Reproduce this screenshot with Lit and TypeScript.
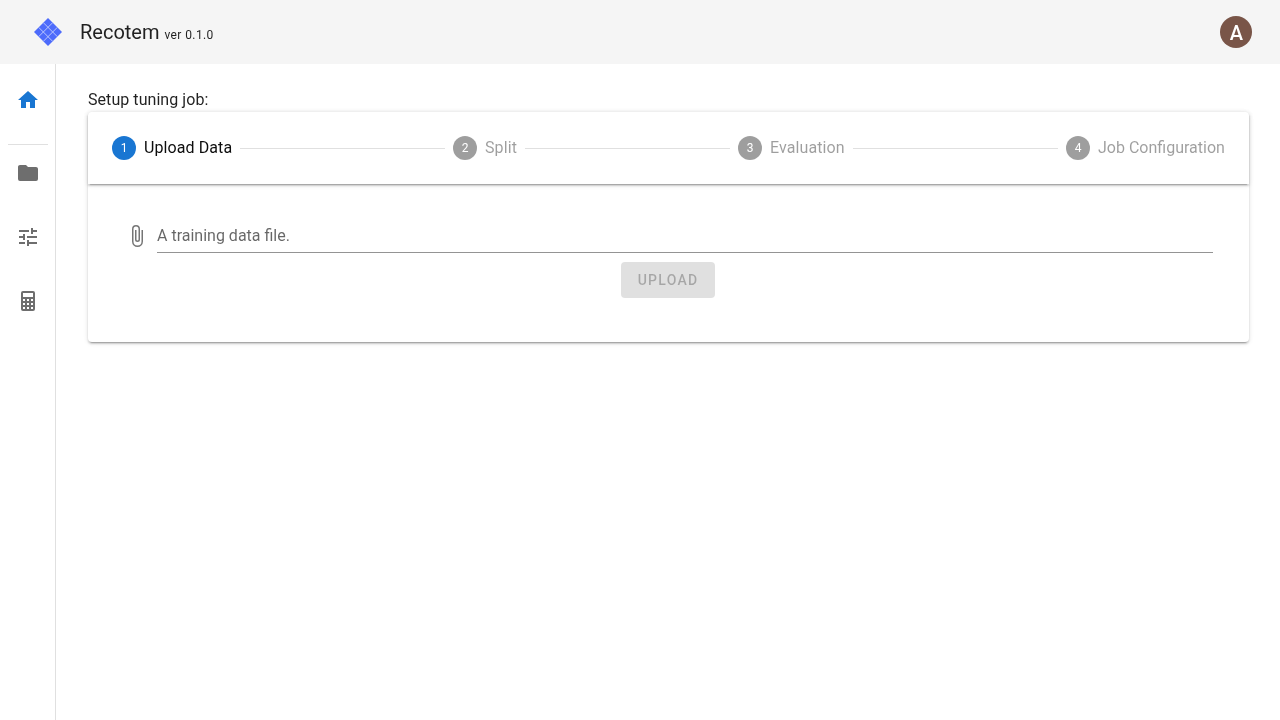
import { LitElement, html, css, svg } from "lit";
import { customElement } from "lit/decorators.js";

const P = {
  home: "M10,20V14H14V20H19V12H22L12,3L2,12H5V20H10Z",
  folder: "M10,4H4C2.89,4 2,4.89 2,6V18A2,2 0 0,0 4,20H20A2,2 0 0,0 22,18V8C22,6.89 21.1,6 20,6H12L10,4Z",
  tune: "M3,17V19H9V17H3M3,5V7H13V5H3M13,21V19H21V17H13V15H11V21H13M7,9V11H3V13H7V15H9V9H7M21,13V11H11V13H21M15,9H17V7H21V5H17V3H15V9Z",
  calc: "M7,2H17A2,2 0 0,1 19,4V20A2,2 0 0,1 17,22H7A2,2 0 0,1 5,20V4A2,2 0 0,1 7,2M7,4V8H17V4H7M7,10V12H9V10H7M11,10V12H13V10H11M15,10V12H17V10H15M7,14V16H9V14H7M11,14V16H13V14H11M15,14V16H17V14H15M7,18V20H9V18H7M11,18V20H13V18H11M15,18V20H17V18H15Z",
  clip: "M16.5,6V17.5A4,4 0 0,1 12.5,21.5A4,4 0 0,1 8.5,17.5V5A2.5,2.5 0 0,1 11,2.5A2.5,2.5 0 0,1 13.5,5V15.5A1,1 0 0,1 12.5,16.5A1,1 0 0,1 11.5,15.5V6H10V15.5A2.5,2.5 0 0,0 12.5,18A2.5,2.5 0 0,0 15,15.5V5A4,4 0 0,0 11,1A4,4 0 0,0 7,5V17.5A5.5,5.5 0 0,0 12.5,23A5.5,5.5 0 0,0 18,17.5V6H16.5Z",
};

const icon = (d: string) => html`<svg class="ic" viewBox="0 0 24 24" width="24" height="24"><path d=${d} fill="currentColor"></path></svg>`;

const logo = svg`<svg class="logo" viewBox="0 0 28 28" width="28" height="28">
  <polygon points="14,0 28,14 14,28 0,14" fill="#4d6bfb"></polygon>
  <g stroke="#b9c6fe" stroke-width="1" fill="none">
    <path d="M9.33,4.67 L23.33,18.67 M4.67,9.33 L18.67,23.33 M18.67,4.67 L4.67,18.67 M23.33,9.33 L9.33,23.33"></path>
  </g>
</svg>`;

const steps = [
  { n: 1, label: "Upload Data", active: true, wide: true },
  { n: 2, label: "Split", wide: true },
  { n: 3, label: "Evaluation", wide: true },
  { n: 4, label: "Job Configuration" },
];

@customElement("app-root")
export class AppRoot extends LitElement {
  static styles = css`
    :host { display: block; font-family: Roboto, "Liberation Sans", sans-serif; color: rgba(0,0,0,.87); background: #fff; height: 720px; overflow: hidden; }
    .gs { will-change: transform; }
    .bar { height: 64px; background: #f5f5f5; display: flex; align-items: center; padding: 0 28px 0 34px; }
    .logo { display: block; flex: none; }
    .title { font-size: 20px; margin-left: 18px; line-height: 32px; padding-top: 2px; }
    .ver { font-size: 12px; letter-spacing: 0.0333em; }
    .spacer { flex: 1; }
    .avatar { width: 32px; height: 32px; border-radius: 50%; background: #795548; color: #fff; font-size: 20px; font-weight: 500; line-height: 34px; text-align: center; text-indent: 1px; }
    .body { display: flex; height: 656px; }
    .nav { width: 55px; border-right: 1px solid #e0e0e0; display: flex; flex-direction: column; align-items: stretch; flex: none; padding-top: 24px; box-sizing: content-box; }
    .nav-item { height: 24px; display: flex; justify-content: center; color: #6e6e6e; margin-bottom: 40px; }
    .nav-item.home { color: #1976d2; margin-bottom: 32px; }
    .nav-sep { height: 1px; background: #e0e0e0; margin: 0 7px 16px 8px; }
    .ic { display: block; flex: none; }
    .main { flex: 1; min-width: 0; padding: 24px 31px 0 32px; }
    .heading { font-size: 16px; line-height: 24px; letter-spacing: 0.06px; }
    .card { background: #fff; border-radius: 4px; box-shadow: 0 3px 1px -2px rgba(0,0,0,.2), 0 2px 2px 0 rgba(0,0,0,.14), 0 1px 5px 0 rgba(0,0,0,.12); }
    .stepper { height: 72px; display: flex; align-items: center; padding: 0 24px; gap: 8px; border-radius: 4px 4px 0 0; box-shadow: 0 3px 1px -2px rgba(0,0,0,.2), 0 2px 2px 0 rgba(0,0,0,.14), 0 1px 5px 0 rgba(0,0,0,.12); }
    .step { display: flex; align-items: center; gap: 8px; font-size: 16px; line-height: 24px; color: rgba(0,0,0,.38); flex: none; }
    .step .lb { margin-top: -1px; }
    .step .lb.wide { letter-spacing: 0.09px; }
    .step.active { color: rgba(0,0,0,.95); }
    .num { width: 24px; height: 24px; border-radius: 50%; background: rgba(0,0,0,.38); color: #fff; font-size: 12px; display: flex; align-items: center; justify-content: center; }
    .step.active .num { background: #1976d2; }
    .line { flex: 1; height: 1px; background: #e0e0e0; margin-top: 1px; }
    .content { height: 158px; box-sizing: border-box; padding: 32px 36px 0 40px; display: flex; flex-direction: column; }
    .field { display: flex; align-items: flex-start; gap: 5px; }
    .field .ic { color: rgba(0,0,0,.54); margin: 8px 3px 0 -3px; }
    .input { flex: 1; height: 36px; border-bottom: 1px solid rgba(0,0,0,.42); font-size: 16px; line-height: 39px; color: rgba(0,0,0,.6); box-sizing: content-box; }
    .actions { display: flex; justify-content: center; margin-top: 9px; padding-right: 5px; }
    .btn { width: 94px; height: 36px; border-radius: 4px; background: rgba(0,0,0,.12); color: rgba(0,0,0,.26); font-size: 14px; font-weight: 500; letter-spacing: 0.0892857em; display: flex; align-items: center; justify-content: center; }
  `;

  render() {
    return html`
      <div class="bar">
        ${logo}
        <div class="title gs">Recotem <span class="ver">ver 0.1.0</span></div>
        <div class="spacer"></div>
        <div class="avatar gs">A</div>
      </div>
      <div class="body">
        <nav class="nav">
          <div class="nav-item home">${icon(P.home)}</div>
          <div class="nav-sep"></div>
          <div class="nav-item">${icon(P.folder)}</div>
          <div class="nav-item">${icon(P.tune)}</div>
          <div class="nav-item">${icon(P.calc)}</div>
        </nav>
        <main class="main">
          <div class="heading gs">Setup tuning job:</div>
          <div class="card">
            <div class="stepper">
              ${steps.map((s, i) => html`
                ${i > 0 ? html`<div class="line"></div>` : ""}
                <div class="step gs ${s.active ? "active" : ""}"><span class="num">${s.n}</span><span class="lb ${s.wide ? "wide" : ""}">${s.label}</span></div>
              `)}
            </div>
            <div class="content">
              <div class="field">
                ${icon(P.clip)}
                <div class="input gs">A training data file.</div>
              </div>
              <div class="actions"><div class="btn gs">UPLOAD</div></div>
            </div>
          </div>
        </main>
      </div>
    `;
  }
}
